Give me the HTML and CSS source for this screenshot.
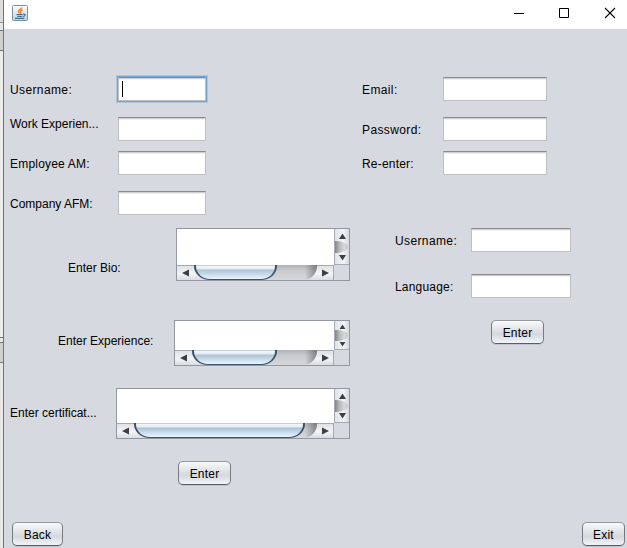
FILE: index.html
```html
<!DOCTYPE html>
<html lang="en">
<head>
<meta charset="utf-8">
<title>Profile</title>
<link rel="stylesheet" href="styles.css">
</head>
<body>
<div class="desktop">
  <div class="strip"></div>
  <div class="window">
    <header class="titlebar">
      <svg class="app-icon" width="16" height="16" viewBox="0 0 16 16">
        <defs><linearGradient id="ic" x1="0" y1="0" x2="0" y2="1"><stop offset="0" stop-color="#fdfdfe"/><stop offset="1" stop-color="#c3d0da"/></linearGradient></defs>
        <rect x=".5" y=".5" width="15" height="15" rx="1" fill="url(#ic)" stroke="#7890a4"/>
        <path d="M9.7 2.5C9.7 4.3 6.3 4.5 6.5 6.5c0 .8.8 1.2 1 2M10.6 5C8.4 5.5 8 6.3 8.6 7.2c.4.6.2 1-.3 1.4" fill="none" stroke="#ee8434" stroke-width="1.4"/>
        <path d="M4.5 9.6h6.2M5.3 11.5h4.8M3 13.4h9.3M11 9.2c3-.7 2.8 2-.2 2.3" fill="none" stroke="#416f94" stroke-width="1.2"/>
      </svg>
      <div class="controls">
        <svg width="12" height="12" viewBox="0 0 12 12"><path d="M1 6.5h10" stroke="#000"/></svg>
        <svg width="12" height="12" viewBox="0 0 12 12"><path d="M1.5 1.5h9v9h-9z" fill="none" stroke="#000"/></svg>
        <svg width="12" height="12" viewBox="0 0 12 12"><path d="M1 1l10 10M11 1L1 11" stroke="#000" stroke-width="1.1"/></svg>
      </div>
    </header>
    <main class="content">
      <section class="left">
        <div class="row first"><span class="label wide">Username:</span><div class="field focused"><i class="caret"></i></div></div>
        <div class="row gap-l"><span class="label raised">Work Experien...</span><div class="field"></div></div>
        <div class="row gap-s"><span class="label medium">Employee AM:</span><div class="field"></div></div>
        <div class="row gap-l"><span class="label">Company AFM:</span><div class="field"></div></div>
        <div class="area-row bio">
          <span class="label">Enter Bio:</span>
          <div class="scroll-area">
            <div class="view"></div>
            <div class="vbar"><svg class="up" viewBox="0 0 7 6"><path d="M3.5 .5L7 6H0z"/></svg><i class="stub"></i><svg class="down" viewBox="0 0 7 6"><path d="M0 0h7L3.5 5.5z"/></svg></div>
            <div class="hbar"><svg class="prev" viewBox="0 0 7 7"><path d="M0 3.5L7 0v7z"/></svg><div class="track"><i class="thumb"></i></div><svg class="next" viewBox="0 0 7 7"><path d="M7 3.5L0 0v7z"/></svg></div>
          </div>
        </div>
        <div class="area-row experience">
          <span class="label">Enter Experience:</span>
          <div class="scroll-area">
            <div class="view"></div>
            <div class="vbar"><svg class="up" viewBox="0 0 7 6"><path d="M3.5 .5L7 6H0z"/></svg><i class="stub"></i><svg class="down" viewBox="0 0 7 6"><path d="M0 0h7L3.5 5.5z"/></svg></div>
            <div class="hbar"><svg class="prev" viewBox="0 0 7 7"><path d="M0 3.5L7 0v7z"/></svg><div class="track"><i class="thumb"></i></div><svg class="next" viewBox="0 0 7 7"><path d="M7 3.5L0 0v7z"/></svg></div>
          </div>
        </div>
        <div class="area-row certificate">
          <span class="label">Enter certificat...</span>
          <div class="scroll-area">
            <div class="view"></div>
            <div class="vbar"><svg class="up" viewBox="0 0 7 6"><path d="M3.5 .5L7 6H0z"/></svg><i class="stub"></i><svg class="down" viewBox="0 0 7 6"><path d="M0 0h7L3.5 5.5z"/></svg></div>
            <div class="hbar"><svg class="prev" viewBox="0 0 7 7"><path d="M0 3.5L7 0v7z"/></svg><div class="track"><i class="thumb"></i></div><svg class="next" viewBox="0 0 7 7"><path d="M7 3.5L0 0v7z"/></svg></div>
          </div>
        </div>
        <button class="btn enter-left">Enter</button>
      </section>
      <section class="right">
        <div class="row first"><span class="label wide">Email:</span><div class="field"></div></div>
        <div class="row gap-l"><span class="label wide">Password:</span><div class="field"></div></div>
        <div class="row gap-s"><span class="label medium">Re-enter:</span><div class="field"></div></div>
        <div class="language">
          <div class="row"><span class="label wide">Username:</span><div class="field"></div></div>
          <div class="row gap-xl"><span class="label medium">Language:</span><div class="field"></div></div>
          <button class="btn enter-right">Enter</button>
        </div>
      </section>
    </main>
    <footer class="footer"><button class="btn back">Back</button><button class="btn exit">Exit</button></footer>
  </div>
</div>
</body>
</html>
```
FILE: styles.css
```css
* { box-sizing: border-box; }
body {
  margin: 0;
  overflow: hidden;
  font: 12px/16px "Liberation Sans", Arial, sans-serif;
  color: #000;
}
.desktop { display: flex; width: 627px; height: 548px; }
.strip {
  width: 4px;
  border-right: 1px solid #737373;
  background: linear-gradient(#dcdcdc 0 22px, #999 22px 23px, #e6e6e6 23px 30px, #6d7580 30px 31px, #cfcfcf 31px 50px, #6d7580 50px 51px, #ececea 51px 337px, #777 337px 338px, #e6e6e6 338px 342px, #777 342px 343px, #cfcfcd 343px 362px, #777 362px 363px, #e8e8e6 363px);
}
.window { flex: 1; display: flex; flex-direction: column; background: #d6d9df; }
.titlebar {
  display: flex;
  justify-content: space-between;
  height: 29px;
  padding: 5px 11px 0 8px;
  background: #fff;
}
.controls { display: flex; gap: 34px; margin: 2px 0 0; height: 12px; }
.controls svg:first-child { margin-right: -1px; }
.content { display: flex; height: 493px; padding-top: 48px; }
.left { width: 352px; padding-left: 6px; }
.right { padding-left: 6px; }
.row { display: flex; align-items: center; height: 24px; }
.gap-s { margin-top: 10px; }
.gap-l { margin-top: 16px; }
.gap-xl { margin-top: 22px; }
.label { flex: none; padding-top: 2px; letter-spacing: 0; white-space: nowrap; }
.wide { letter-spacing: .38px; }
.medium { letter-spacing: .2px; }
.raised { padding: 0; margin-bottom: 10px; }
.left .row .label { width: 108px; }
.right .row .label { width: 81px; }
.right .language .label { width: 76px; }
.field {
  width: 88px;
  height: 24px;
  border: 1px solid #bfbfbf;
  border-top-color: #8b8b8f;
  background: linear-gradient(#cfcfd2 0 1px, #f2f2f2 1px 2px, #fff 2px);
}
.right .field { width: 104px; }
.right .language .field { width: 100px; }
.focused { box-shadow: 0 0 0 1px #73a4d1, 0 0 0 2px #adc6df; }
.caret { display: block; width: 1px; height: 16px; margin: 3px 0 0 3px; background: #000; }
.area-row { display: flex; align-items: center; width: 340px; }
.area-row .label { margin-right: auto; }
.bio { margin-top: 13px; padding-left: 58px; height: 53px; }
.bio .label { padding-top: 26px; }
.experience { margin-top: 39px; padding-left: 48px; height: 46px; }
.experience .label { padding: 0 0 4px; }
.certificate .label { padding: 0 0 2px; }
.certificate { margin-top: 22px; height: 51px; }
.scroll-area {
  display: grid;
  grid-template: minmax(0, 1fr) 15px / 1fr 15px;
  width: 174px;
  height: 100%;
  border: 1px solid #9297a1;
}
.experience .scroll-area { width: 176px; }
.certificate .scroll-area { width: 234px; }
.view { background: #fff; }
.vbar {
  display: flex;
  flex-direction: column;
  align-items: center;
  justify-content: space-between;
  padding: 4px 0 3px;
  border-left: 1px solid #a5a9b2;
  border-bottom: 1px solid #a5a9b2;
  background: linear-gradient(90deg, #e1e3e7, #f3f4f6 60%, #d5d8dd);
}
.experience .vbar { padding: 3px 0 2px; }
.vbar svg, .hbar svg { flex: none; display: block; fill: #3c3f43; }
.vbar svg { width: 7px; height: 6px; }
.experience .vbar svg { height: 5px; }
.stub {
  align-self: flex-start;
  width: 13px;
  height: 12px;
  flex: none;
  border-radius: 0 12px 12px 0 / 0 6px 6px 0;
  background: linear-gradient(90deg, #85868a, #b9babd 35%, #d7d8dc 70%, #c3c5c9);
}
.experience .stub { height: 11px; }
.hbar {
  display: flex;
  align-items: center;
  padding: 0 4px 0 5px;
  border-top: 1px solid #a5a9b2;
  border-right: 1px solid #a5a9b2;
  background: linear-gradient(#dfe1e5, #f3f4f6 55%, #d9dce0);
}
.hbar svg { width: 7px; height: 8px; }
.track {
  flex: 1;
  height: 15px;
  margin: -1px 5px 0;
  border-radius: 0 0 14px 15px / 0 0 14px 14px;
  background: linear-gradient(90deg, transparent calc(100% - 12px), #4b4d5290), linear-gradient(#b0b1b6, #c9cace 35%, #d6d7db);
}
.thumb {
  display: block;
  width: 83px;
  height: 15px;
  border: solid #36546b;
  border-width: 0 2px 1px;
  border-radius: 0 0 16px 16px / 0 0 14px 14px;
  background: linear-gradient(#94a5b4 0, #f4f8fb 1px, #e3ebf2 4px, #adc2d6 5px, #c5d9e9 9px, #e9f7ff 14px);
}
.experience .thumb { width: 85px; }
.certificate .thumb { width: 171px; }
.btn {
  display: block;
  width: 53px;
  height: 24px;
  padding: 1px 0 0;
  border: 1px solid #777a80;
  border-top-color: #96999e;
  border-bottom-color: #595c61;
  border-radius: 5px;
  background: linear-gradient(#f9fafb, #e4e6ea 35%, #d5d8de 60%, #f1f4f8);
  box-shadow: 0 1px 0 #c0c3c8;
  font: inherit;
  letter-spacing: .2px;
  color: #000;
}
.enter-left { margin: 22px 0 0 168px; }
.language { margin-top: 53px; padding-left: 33px; }
.enter-right { margin: 22px 0 0 96px; }
.footer { display: flex; justify-content: space-between; padding: 0 2px 0 8px; }
.back { width: 51px; }
.exit { width: 43px; }
```
